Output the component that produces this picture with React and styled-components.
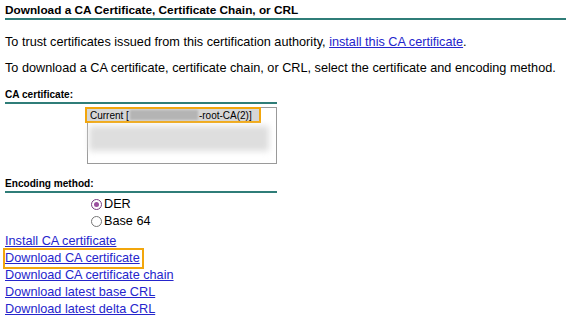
import React, { useState } from "react";
import styled, { createGlobalStyle } from "styled-components";

const Global = createGlobalStyle`
  html, body { margin: 0; padding: 0; background: #ffffff; overflow: hidden; }
  body { font-family: "Liberation Sans", Arial, sans-serif; color: #000; }
`;

const links = [
  "Install CA certificate",
  "Download CA certificate",
  "Download CA certificate chain",
  "Download latest base CRL",
  "Download latest delta CRL",
];

const App = () => {
  const [encoding, setEncoding] = useState("DER");

  return (
    <Page>
      <Global />
      <Title>Download a CA Certificate, Certificate Chain, or CRL</Title>
      <Para $top={15}>
        To trust certificates issued from this certification authority,{" "}
        <Link href="#">install this CA certificate</Link>.
      </Para>
      <Para $top={11}>
        To download a CA certificate, certificate chain, or CRL, select the certificate and encoding method.
      </Para>

      <Section $top={12}>
        <Label>CA certificate:</Label>
        <ListBox>
          <Option $selected>
            Current [<Hidden />-root-CA(2)]
          </Option>
          <Blurred />
        </ListBox>
      </Section>

      <Section $top={13}>
        <Label>Encoding method:</Label>
        <Radios>
          {["DER", "Base 64"].map((e) => (
            <RadioRow key={e} onClick={() => setEncoding(e)}>
              <Radio $on={encoding === e} />
              {e}
            </RadioRow>
          ))}
        </Radios>
      </Section>

      <Links>
        {links.map((l, i) => (
          <LinkRow key={l} $focus={i === 1}>
            <Link href="#">{l}</Link>
          </LinkRow>
        ))}
      </Links>
    </Page>
  );
};
export default App;

const Page = styled.div`
  padding: 3px 0 0 5px;
  width: 561px;
  white-space: nowrap;
`;
const Title = styled.div`
  font-size: 11.8px;
  font-weight: bold;
  line-height: 15px;
  border-bottom: 2px solid #2f7d78;
`;
const Para = styled.p`
  font-size: 12.7px;
  line-height: 15px;
  margin: ${(p) => p.$top}px 0 0 0;
`;
const Link = styled.a`
  color: #2525cc;
  text-decoration: underline;
`;
const Section = styled.div`
  margin-top: ${(p) => p.$top}px;
  width: 272px;
`;
const Label = styled.div`
  font-size: 10.1px;
  font-weight: bold;
  line-height: 13px;
  padding-bottom: 1px;
  border-bottom: 2px solid #2f7d78;
`;
const ListBox = styled.div`
  margin: 3px 0 0 82px;
  height: 55px;
  border: 1px solid #9a9a9a;
  background: #fff;
`;
const Option = styled.div`
  display: flex;
  align-items: center;
  font-size: 10px;
  line-height: 11px;
  padding: 0 0 0 3px;
  background: ${(p) => (p.$selected ? "#d6d6d6" : "transparent")};
  border: 2px solid ${(p) => (p.$selected ? "#f2a60c" : "transparent")};
  width: 176px;
  height: 16px;
  box-sizing: border-box;
  margin: -1px 0 0 -3px;
`;
const Hidden = styled.span`
  display: inline-block;
  width: 68px;
  height: 10px;
  margin: 0 1px;
  background: #b4b4b4;
  filter: blur(1px);
`;
const Blurred = styled.div`
  margin: 3px 7px 0 1px;
  height: 25px;
  background: #dedede;
  filter: blur(3px);
`;
const Radios = styled.div`
  margin: 4px 0 0 86px;
  display: flex;
  flex-direction: column;
  gap: 2px;
`;
const RadioRow = styled.label`
  display: flex;
  align-items: center;
  gap: 2px;
  font-size: 12.7px;
  line-height: 15px;
  cursor: pointer;
`;
const Radio = styled.span`
  width: 9px;
  height: 9px;
  border-radius: 50%;
  border: 1px solid ${(p) => (p.$on ? "#7a3f80" : "#777")};
  background: #fff;
  position: relative;
  &::after {
    content: "";
    display: ${(p) => (p.$on ? "block" : "none")};
    position: absolute;
    inset: 2px;
    border-radius: 50%;
    background: #9b4f9e;
  }
`;
const Links = styled.div`
  margin-top: 4px;
  display: flex;
  flex-direction: column;
  align-items: flex-start;
`;
const LinkRow = styled.div`
  font-size: 12.7px;
  line-height: 15px;
  padding: 1px 2px 1px 0;
  margin: -2px 0 -2px -2px;
  border: 2px solid ${(p) => (p.$focus ? "#f2a60c" : "transparent")};
`;
